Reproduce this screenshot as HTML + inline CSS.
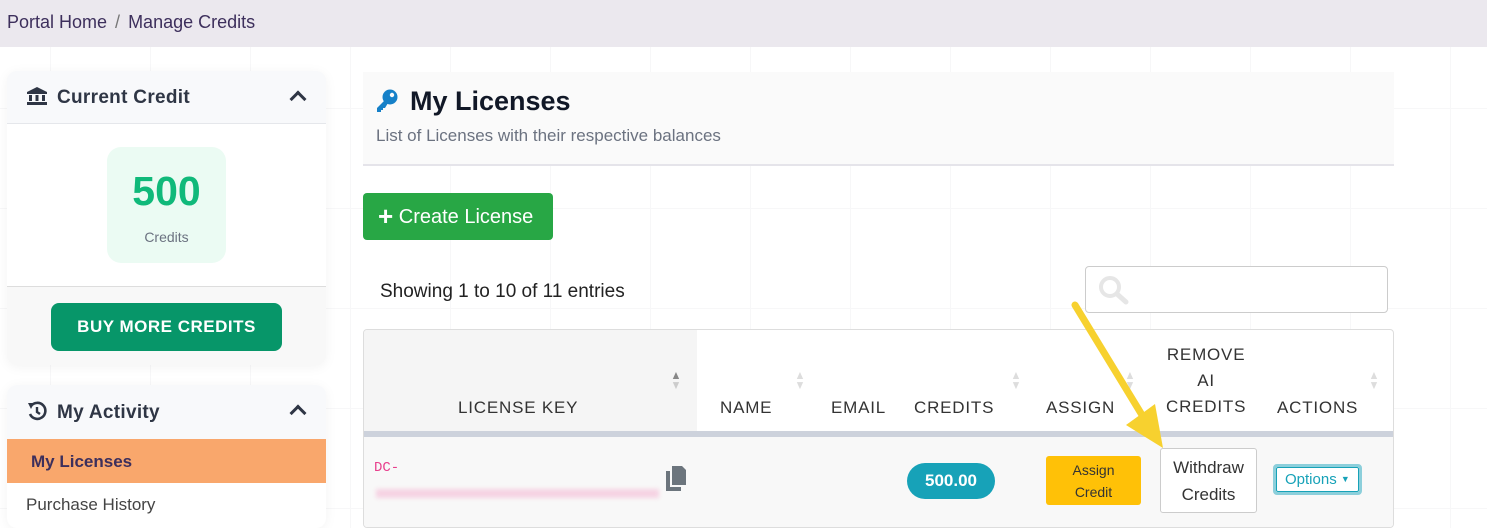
<!DOCTYPE html>
<html><head><style>
*{box-sizing:border-box;margin:0;padding:0}
body{width:1487px;height:528px;overflow:hidden;font-family:"Liberation Sans",sans-serif;background:#fff;position:relative;
background-image:linear-gradient(#f7f7f8 1px,transparent 1px),linear-gradient(90deg,#f7f7f8 1px,transparent 1px);background-size:100px 100px;background-position:50px 8px}
.abs{position:absolute}
.bc{left:0;top:0;width:1487px;height:47px;background:#ebe8ee;font-size:18px;color:#3d2f5c;padding:12px 7px}
.bc span{color:#777;margin:0 8px}
.card{background:#fff;border-radius:10px;box-shadow:0 2px 12px rgba(0,0,0,0.05);overflow:hidden}
.hd{background:#f8f9fb;height:53px;border-bottom:1px solid #e5e7eb;font-weight:bold;font-size:19px;color:#2f3645;padding:16px 20px;position:relative;letter-spacing:.3px}
.chev{position:absolute;right:22px;top:22px;width:12px;height:12px;border-left:3px solid #2f3645;border-top:3px solid #2f3645;transform:rotate(45deg)}
.th{position:absolute;font-size:17px;color:#333;letter-spacing:.8px;text-align:center}
.sort{position:absolute;font-size:12px;line-height:10px;color:#ddd;transform:scaleX(.9)}
</style></head><body>
<div class="abs bc">Portal Home<span>/</span>Manage Credits</div>

<div class="abs card" style="left:7px;top:71px;width:319px;height:294px;background:#f8f8f8">
 <div class="hd"><svg width="20" height="18" viewBox="0 0 20 18" style="vertical-align:-2px;margin-right:10px"><path d="M10 0L0 5v2h20V5z M2 8h3v6H2z M8.5 8h3v6h-3z M15 8h3v6h-3z M0 15h20v3H0z" fill="#2f3645"/></svg>Current Credit<div class="chev"></div></div>
 <div style="background:#fff;height:163px;position:relative;border-bottom:1px solid #ddd">
  <div class="abs" style="left:100px;top:23px;width:119px;height:116px;background:#ebfbf3;border-radius:14px;text-align:center">
   <div style="font-size:41px;font-weight:bold;color:#10b97a;margin-top:21px">500</div>
   <div style="font-size:14px;color:#6b7280;margin-top:14px">Credits</div>
  </div>
 </div>
 <div class="abs" style="left:44px;top:232px;width:231px;height:48px;background:#079669;border-radius:8px;color:#fff;font-weight:bold;font-size:17px;text-align:center;line-height:48px;letter-spacing:.5px">BUY MORE CREDITS</div>
</div>

<div class="abs card" style="left:7px;top:385px;width:319px;height:143px">
 <div class="hd" style="height:54px;border:none"><svg width="20" height="20" viewBox="0 0 20 20" style="vertical-align:-3px;margin-right:10px"><path d="M4 5A8 8 0 1 1 3 13" fill="none" stroke="#2f3645" stroke-width="2.6"/><path d="M1 2l6 0-3 6z" fill="#2f3645"/><path d="M10 6v5l3 2" fill="none" stroke="#2f3645" stroke-width="2.4"/></svg>My Activity<div class="chev"></div></div>
 <div style="background:#f9a76c;height:44px;font-weight:bold;font-size:17px;color:#3d2f5c;padding:13px 24px">My Licenses</div>
 <div style="height:45px;font-size:17px;color:#444;padding:12px 19px">Purchase History</div>
</div>

<div class="abs" style="left:363px;top:72px;width:1031px;height:94px;background:#fafafa;border-bottom:2px solid #e5e4ea">
 <svg class="abs" style="left:13px;top:17px" width="22" height="24" viewBox="0 0 22 24"><circle cx="14" cy="8" r="7.5" fill="#1580c8"/><circle cx="16" cy="6" r="2.2" fill="#fafafa"/><path d="M9 11L1 19v4h4v-2h2v-2h2l3-5z" fill="#1580c8"/></svg>
 <div class="abs" style="left:47px;top:14px;font-size:27px;font-weight:bold;color:#111827">My Licenses</div>
 <div class="abs" style="left:13px;top:54px;font-size:17px;color:#6b7280">List of Licenses with their respective balances</div>
</div>

<div class="abs" style="left:363px;top:193px;width:190px;height:47px;background:#28a745;border-radius:4px;color:#fff;font-size:20px;line-height:47px;padding-left:15px"><b style="font-size:26px;vertical-align:-2px">+</b> Create License</div>

<div class="abs" style="left:380px;top:281px;font-size:19px;color:#222">Showing 1 to 10 of 11 entries</div>
<div class="abs" style="left:1085px;top:266px;width:303px;height:47px;border:1px solid #ccc;border-radius:4px;background:#fff">
 <svg class="abs" style="left:12px;top:8px" width="32" height="30" viewBox="0 0 32 30"><circle cx="12" cy="12" r="9" fill="none" stroke="#e6e6e6" stroke-width="4"/><path d="M19 19l9 8" stroke="#e6e6e6" stroke-width="5" stroke-linecap="round"/></svg>
</div>

<div class="abs" style="left:363px;top:329px;width:1031px;height:199px;border:1px solid #ddd;border-radius:4px;background:#fff;overflow:hidden">
 <div class="abs" style="left:0;top:0;width:333px;height:104px;background:#f5f5f5"></div>
 <div class="abs" style="left:0;top:101px;width:1031px;height:6px;background:#cdd2dc"></div>
 <div class="abs" style="left:0;top:107px;width:1031px;height:92px;background:#f8f8f8"></div>
 <div class="th" style="left:94px;top:68px">LICENSE KEY</div>
 <div class="th" style="left:356px;top:68px">NAME</div>
 <div class="th" style="left:467px;top:68px">EMAIL</div>
 <div class="th" style="left:550px;top:68px">CREDITS</div>
 <div class="th" style="left:682px;top:68px">ASSIGN</div>
 <div class="th" style="left:802px;top:12px;line-height:26px">REMOVE<br>AI<br>CREDITS</div>
 <div class="th" style="left:913px;top:68px">ACTIONS</div>
 <div class="sort" style="left:306px;top:40px;color:#888">▲<br><span style="color:#ccc">▼</span></div>
 <div class="sort" style="left:430px;top:40px">▲<br>▼</div>
 <div class="sort" style="left:646px;top:40px">▲<br>▼</div>
 <div class="sort" style="left:760px;top:40px">▲<br>▼</div>
 <div class="sort" style="left:1004px;top:40px">▲<br>▼</div>
 <div class="abs" style="left:10px;top:130px;font-family:'Liberation Mono',monospace;font-size:14px;color:#e83e8c">DC-</div>
 <div class="abs" style="left:12px;top:159px;width:283px;height:9px;background:#f6d3e3;filter:blur(2px)"></div>
 <svg class="abs" style="left:302px;top:136px" width="20" height="25" viewBox="0 0 20 25"><path d="M6 0h10l4 4v15H6z" fill="#6c757d"/><path d="M0 5h4v16h11v4H0z" fill="#6c757d"/></svg>
 <div class="abs" style="left:543px;top:133px;width:88px;height:36px;border-radius:18px;background:#17a2b8;color:#fff;font-weight:bold;font-size:17px;text-align:center;line-height:36px">500.00</div>
 <div class="abs" style="left:682px;top:126px;width:95px;height:49px;border-radius:3px;background:#ffc107;font-size:14px;color:#333;text-align:center;line-height:22px;padding-top:3px">Assign<br>Credit</div>
 <div class="abs" style="left:796px;top:118px;width:97px;height:65px;border:1px solid #ccc;border-radius:3px;background:#fff;font-size:17px;color:#333;text-align:center;line-height:27px;padding-top:5px">Withdraw<br>Credits</div>
 <div class="abs" style="left:909px;top:134px;width:89px;height:31px;border:3px solid #8ccfdb;border-radius:4px;background:#fff"><div style="border:1.5px solid #17a2b8;border-radius:2px;height:25px;font-size:15px;color:#17a2b8;padding:3px 0 0 8px">Options <span style="font-size:9px;vertical-align:2px">▼</span></div></div>
</div>

<svg class="abs" style="left:1060px;top:295px" width="110" height="160" viewBox="0 0 110 160"><path d="M15 10L82 120" stroke="#f7d12f" stroke-width="7" stroke-linecap="round"/><path d="M66 130L103 153 95 109z" fill="#f7d12f"/></svg>
</body></html>
